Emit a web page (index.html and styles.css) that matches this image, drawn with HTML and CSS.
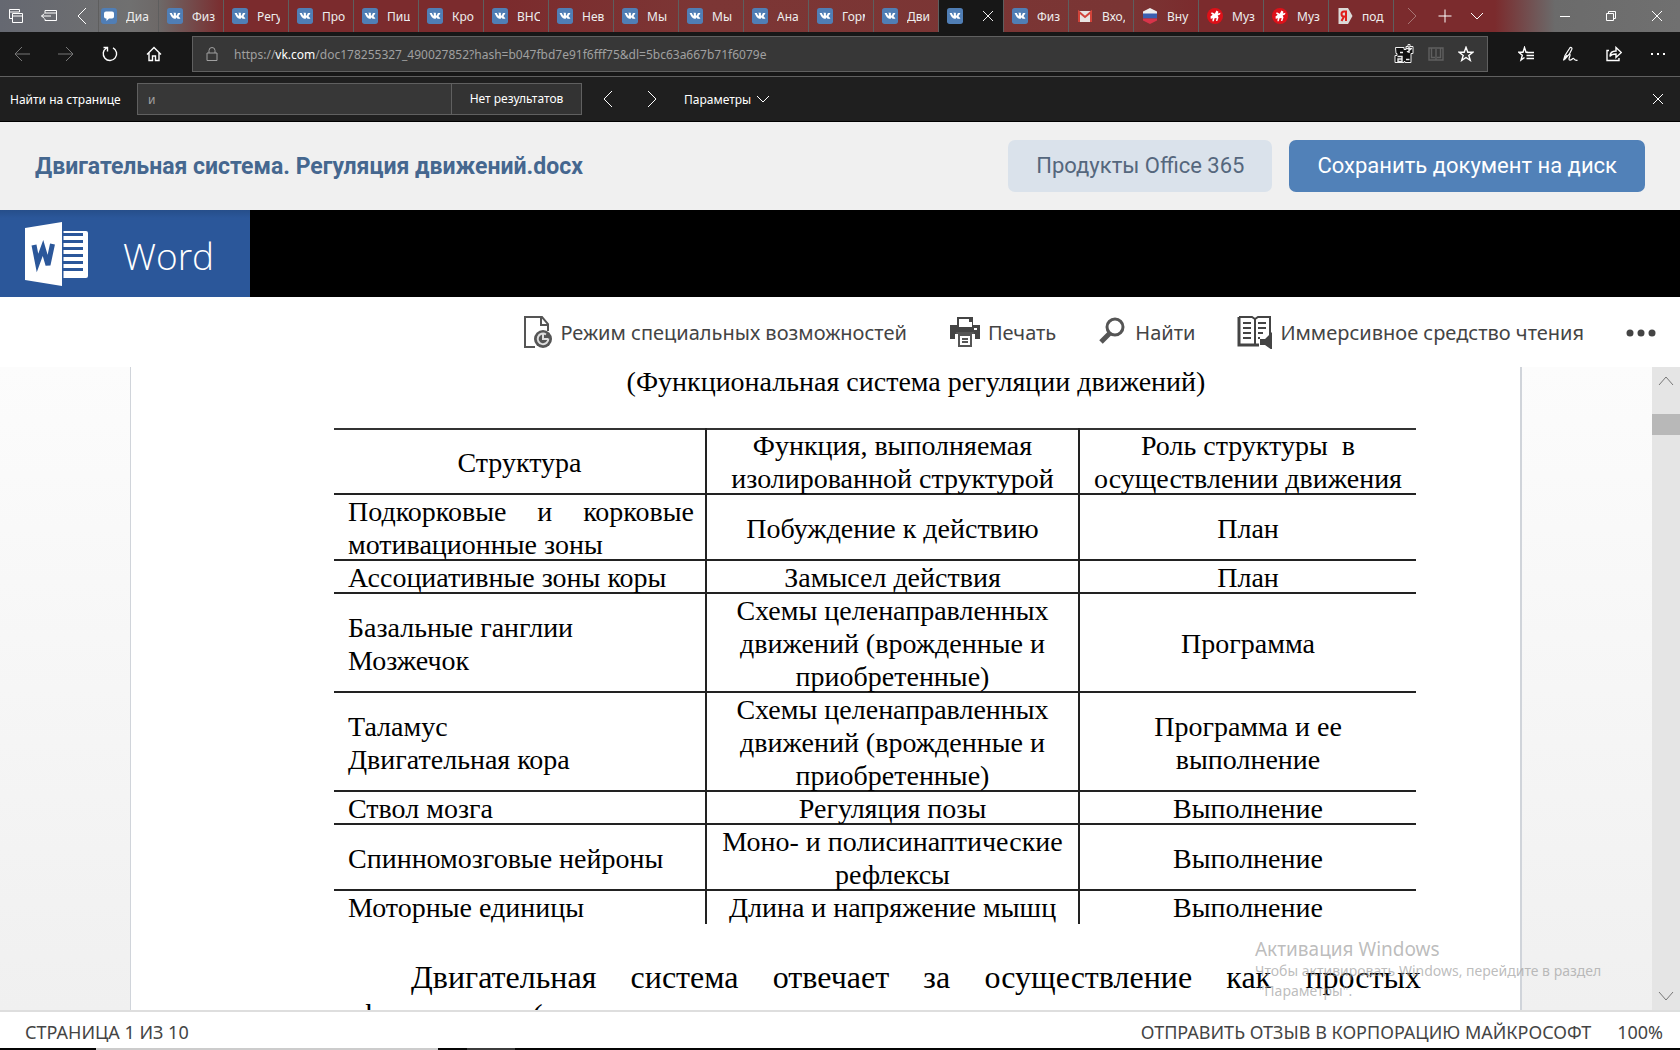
FILE: index.html
```html
<!DOCTYPE html>
<html lang="ru">
<head>
<meta charset="utf-8">
<title>Двигательная система. Регуляция движений.docx</title>
<link rel="stylesheet" href="styles.css">
</head>
<body>
<svg class="sprite" aria-hidden="true">
  <symbol id="vk" viewBox="0 0 24 24"><rect width="24" height="24" rx="4" fill="#507eb5"/><path fill="#fff" d="M12.785 16.241s.288-.032.436-.194c.136-.148.132-.427.132-.427s-.02-1.304.576-1.496c.588-.19 1.341 1.26 2.14 1.818.605.422 1.064.33 1.064.33l2.137-.03s1.117-.071.587-.964c-.043-.073-.308-.661-1.588-1.87-1.34-1.264-1.16-1.059.453-3.246.983-1.332 1.376-2.145 1.253-2.493-.117-.332-.84-.244-.84-.244l-2.406.015s-.178-.025-.31.056c-.13.079-.212.262-.212.262s-.382 1.03-.89 1.907c-1.07 1.85-1.499 1.948-1.674 1.832-.407-.267-.305-1.075-.305-1.648 0-1.793.267-2.54-.521-2.733-.262-.065-.454-.107-1.123-.114-.858-.009-1.585.003-1.996.208-.274.136-.485.44-.356.457.159.022.519.099.71.363.246.341.237 1.107.237 1.107s.142 2.11-.33 2.371c-.325.18-.77-.187-1.725-1.865-.489-.859-.859-1.81-.859-1.81s-.07-.176-.198-.272c-.154-.115-.37-.151-.37-.151l-2.286.015s-.343.01-.469.161C3.94 7.721 4.043 8 4.043 8s1.79 4.258 3.817 6.403c1.858 1.967 3.968 1.838 3.968 1.838h.957z"/></symbol>
  <symbol id="muz" viewBox="0 0 16 16"><circle cx="8" cy="8" r="8" fill="#de1119"/><path fill="#fff" d="M9.500 2.500l2 1.200-.7 1.800 2.700-.8-.5 1.800-2.300 1 .8 2-1.200 3.500H9l.6-3-2 .2-.9 3H5.400l.3-3.200-1.900 1L3.500 8.500l2.200-1.700L4 5.500l.8-1.300 3 1.500z"/></symbol>
  <symbol id="right" viewBox="0 0 16 16"><path d="M4 0l8 8-8 8"/></symbol>
  <symbol id="left" viewBox="0 0 16 16"><path d="M12 0L4 8l8 8"/></symbol>
  <symbol id="down" viewBox="0 0 16 16"><path d="M2 5l6 6 6-6"/></symbol>
  <symbol id="close" viewBox="0 0 16 16"><path d="M3 3l10 10M13 3L3 13"/></symbol>
</svg>

<header class="browser">
  <div class="tabs">
    <button class="strip-btn" aria-label="Отложенные вкладки"><svg class="ico" viewBox="0 0 16 16"><path d="M4 10.500H1.500v-9h10V4M1.500 4h10M4.500 5.500h10v9h-10zM4.500 8h10"/></svg></button>
    <button class="strip-btn strip-btn-wide" aria-label="Отложить вкладки"><svg class="ico" viewBox="0 0 16 16"><path d="M4 5V2.500h11.500v10H4V11M4 5h11.500M.5 8H10M3.500 5.500L.5 8l3 2.500"/></svg></button>
    <button class="strip-btn strip-btn-wide" aria-label="Назад по вкладкам"><svg class="ico"><use href="#left"/></svg></button>
    <button class="tab tab-first"><svg class="fav" viewBox="0 0 16 16"><rect width="16" height="16" rx="3" fill="#507eb5"/><path fill="#fff" d="M5 3.500h6a2 2 0 0 1 2 2v3a2 2 0 0 1-2 2H8l-2.500 2.500v-2.500H5a2 2 0 0 1-2-2v-3a2 2 0 0 1 2-2z"/></svg><span>Диа</span></button>
    <button class="tab"><svg class="fav"><use href="#vk"/></svg><span>Физ</span></button>
    <button class="tab"><svg class="fav"><use href="#vk"/></svg><span>Регу</span></button>
    <button class="tab"><svg class="fav"><use href="#vk"/></svg><span>Про</span></button>
    <button class="tab"><svg class="fav"><use href="#vk"/></svg><span>Пищ</span></button>
    <button class="tab"><svg class="fav"><use href="#vk"/></svg><span>Кро</span></button>
    <button class="tab"><svg class="fav"><use href="#vk"/></svg><span>ВНС</span></button>
    <button class="tab"><svg class="fav"><use href="#vk"/></svg><span>Нев</span></button>
    <button class="tab"><svg class="fav"><use href="#vk"/></svg><span>Мы</span></button>
    <button class="tab"><svg class="fav"><use href="#vk"/></svg><span>Мы</span></button>
    <button class="tab"><svg class="fav"><use href="#vk"/></svg><span>Ана</span></button>
    <button class="tab"><svg class="fav"><use href="#vk"/></svg><span>Горм</span></button>
    <button class="tab"><svg class="fav"><use href="#vk"/></svg><span>Дви</span></button>
    <div class="tab tab-active"><svg class="fav"><use href="#vk"/></svg><button class="tab-close" aria-label="Закрыть вкладку"><svg class="ico"><use href="#close"/></svg></button></div>
    <button class="tab"><svg class="fav"><use href="#vk"/></svg><span>Физ</span></button>
    <button class="tab"><svg class="fav" viewBox="0 0 16 16"><path fill="#e8e4e2" d="M1 3h14v11H1z"/><path fill="none" stroke="#d2443a" stroke-width="2" d="M2 14V4l6 5 6-5v10"/></svg><span>Вхо,</span></button>
    <button class="tab"><svg class="fav" viewBox="0 0 16 16"><path fill="#eee" d="M8 0l7 3.500V6H1V3.500z"/><path fill="#3b5fb0" d="M1 5.500h14v5H1z"/><path fill="#d8344a" d="M1 10.500h14v2L8 16l-7-3.500z"/></svg><span>Вну</span></button>
    <button class="tab"><svg class="fav"><use href="#muz"/></svg><span>Муз</span></button>
    <button class="tab"><svg class="fav"><use href="#muz"/></svg><span>Муз</span></button>
    <button class="tab"><svg class="fav" viewBox="0 0 16 16"><path fill="#dcdad8" d="M1.500 0H11l4.500 8-4.500 8H1.500z"/><path fill="none" stroke="#e0201b" stroke-width="2" d="M9 13V3.500H7a2.300 2.300 0 0 0 0 5h2M7 8.500L4.500 13"/></svg><span>под</span></button>
    <div class="strip-end">
      <button class="strip-btn strip-next" aria-label="Вперёд по вкладкам"><svg class="ico"><use href="#right"/></svg></button>
      <button class="strip-btn" aria-label="Новая вкладка"><svg class="ico" viewBox="0 0 16 16"><path d="M8 1.500v13M1.500 8h13"/></svg></button>
      <button class="strip-btn" aria-label="Список вкладок"><svg class="ico"><use href="#down"/></svg></button>
    </div>
    <div class="window-btns">
      <button aria-label="Свернуть"><svg class="ico" viewBox="0 0 16 16"><path d="M3 8.500h10"/></svg></button>
      <button aria-label="Восстановить"><svg class="ico" viewBox="0 0 16 16"><path d="M3.500 5.500h7v7h-7zM5.500 5.500v-2h7v7h-2"/></svg></button>
      <button aria-label="Закрыть"><svg class="ico"><use href="#close"/></svg></button>
    </div>
  </div>

  <div class="nav">
    <div class="nav-btns">
      <button class="dim" aria-label="Назад"><svg class="ico" viewBox="0 0 16 16"><path d="M16 8H1M8 1L1 8l7 7"/></svg></button>
      <button class="dim" aria-label="Вперёд"><svg class="ico" viewBox="0 0 16 16"><path d="M0 8h15M8 1l7 7-7 7"/></svg></button>
      <button aria-label="Обновить"><svg class="ico bold" viewBox="0 0 16 16"><path d="M11 1.800a6.700 6.700 0 1 1-6.500.200M1.500 1.500h4v4"/></svg></button>
      <button aria-label="Домой"><svg class="ico bold" viewBox="0 0 16 16"><path d="M1 8.500L8 1.500l7 7M3 7v7.500h3.500V10h3v4.500H13V7"/></svg></button>
    </div>
    <div class="address">
      <svg class="ico lock" viewBox="0 0 16 16"><path d="M3 7h10v7.500H3zM5 7V4.500a3 3 0 0 1 6 0V7"/></svg>
      <div class="url">https://<b>vk.com</b>/doc178255327_490027852?hash=b047fbd7e91f6fff75&amp;dl=5bc63a667b71f6079e</div>
      <button aria-label="Перевести"><svg class="ico ico-tr" viewBox="0 0 20 20"><path fill="#111" stroke="#eee" d="M1.500 3.500H10v2h2v-3h2v-2h2v2h3v7h-2v9h-6v-1h-1v1h-9v-7h2v-2h-1z"/><path stroke="#eee" stroke-width="1.400" d="M12 4.500h6M15 2v7M13 8l4-3M3.500 12.500h4.500v5H4V15h4M12 15.500h3.500M6 8.500h3"/></svg></button>
      <button class="faint" aria-label="Режим чтения"><svg class="ico bold" viewBox="0 0 16 16"><path d="M1 2h14v12H1zM3.500 2.500v9H7M12.500 2.500v9H9M8 3v11"/></svg></button>
      <button aria-label="В избранное"><svg class="ico bold" viewBox="0 0 16 16"><path d="M8 1.300l1.800 4.900h5l-4 3.200 1.500 5L8 11.500l-4.300 2.900 1.500-5-4-3.200h5z"/></svg></button>
    </div>
    <div class="nav-tools">
      <button aria-label="Избранное"><svg class="ico bold" viewBox="0 0 16 16"><path d="M10 6.200H8L6.500 1.500 5 6.200H.8l3.500 3-1.300 4.800 3.500-2.500M8.500 6.500H16M8.500 9.500H16M8.500 12.500H16"/></svg></button>
      <button aria-label="Заметки"><svg class="ico" viewBox="0 0 16 16"><path stroke-width="1.200" d="M1.500 14.500L3 9.500 7.500 2.500c1-1.800 3-1 2.300.8L7.500 8 2.500 13.500M5 9l-3.500 5.500M7.500 8c1.500.5-.5 3.500-.5 5s1.500 1.500 3 .2 2-.7 2.500.3 1.500.8 3 .8"/></svg></button>
      <button aria-label="Поделиться"><svg class="ico bold" viewBox="0 0 16 16"><path d="M3 4.500H1v10h12V12M4 10.500c0-4 2.500-5.500 6-5.500V1.500l5.300 5-5.300 5V8c-3 0-5 .5-6 2.500z"/></svg></button>
      <button aria-label="Ещё"><svg class="ico" viewBox="0 0 16 16"><path class="fill" d="M1 7h2v2H1zM7 7h2v2H7zM13 7h2v2h-2z"/></svg></button>
    </div>
  </div>

  <form class="find">
    <label for="find-text">Найти на странице</label>
    <input id="find-text" type="text" value="и">
    <output class="find-result" for="find-text">Нет результатов</output>
    <button type="button" class="find-step" aria-label="Предыдущее"><svg class="ico"><use href="#left"/></svg></button>
    <button type="button" class="find-step" aria-label="Следующее"><svg class="ico"><use href="#right"/></svg></button>
    <button type="button" class="find-options">Параметры<svg class="ico"><use href="#down"/></svg></button>
    <button type="button" class="find-close" aria-label="Закрыть"><svg class="ico"><use href="#close"/></svg></button>
  </form>
</header>

<div class="doc-head">
  <h1>Двигательная система. Регуляция движений.docx</h1>
  <button class="btn btn-light">Продукты Office 365</button>
  <button class="btn btn-blue">Сохранить документ на диск</button>
</div>

<div class="word-bar">
  <a class="word-logo" href="#">
    <svg viewBox="0 0 64 64" aria-hidden="true"><path fill="#fff" d="M0 6L37 0v64L0 58z"/><path fill="#fff" fill-rule="evenodd" d="M38.500 9H61q2 0 2 2v43q0 2-2 2H38.500v-7H58v-3H38.500v-4H58v-3H38.500v-4H58v-3H38.500v-4H58v-3H38.500v-4H58v-3H38.500v-4H58v-3H38.500z"/><path fill="none" stroke="#2b579a" stroke-width="5" d="M9 23l3.500 18L18 26l5 17L27.500 22"/></svg>
    <span>Word</span>
  </a>
</div>

<nav class="toolbar">
  <button><svg width="30" height="34" viewBox="0 0 30 34"><path fill="none" stroke="#555" stroke-width="2" d="M12 32H2V2h17l6 7v7M18 2v8h7"/><circle cx="20" cy="24" r="9" fill="#555"/><path fill="none" stroke="#ddd" stroke-width="2" d="M23 19.500a5.300 5.300 0 1 0 2.300 4M20 19v5h5"/></svg>Режим специальных возможностей</button>
  <button><svg width="32" height="34" viewBox="0 0 32 34"><path fill="#444" d="M1 10h30v14h-5v-5H6v5H1zM8 10V2h16v8z"/><path fill="#fff" d="M10 4h10v3h3v5H10zM25 13h3v2h-3zM8 20h16v12H8z"/><path fill="none" stroke="#555" stroke-width="2" d="M10 20h12v11H10zM13 24h6M13 27h6M7 18h18"/></svg>Печать</button>
  <button><svg width="30" height="34" viewBox="0 0 30 34"><circle cx="17" cy="12" r="8" fill="none" stroke="#555" stroke-width="3"/><path stroke="#555" stroke-width="5" d="M12 18l-9 9"/></svg>Найти</button>
  <button><svg width="36" height="34" viewBox="0 0 36 34"><path fill="none" stroke="#444" stroke-width="2" d="M2 2h13l3 2 3-2h12v18"/><path fill="none" stroke="#444" stroke-width="3" d="M2 2v28h20"/><path fill="none" stroke="#444" stroke-width="2" d="M18 4v25M6 8h8M6 13h8M6 18h8M6 23h8M21 8h8M21 13h8M21 18h5M21 23h2"/><path fill="#444" d="M23 24h5l7-7v18l-7-5h-5z"/></svg>Иммерсивное средство чтения</button>
  <button class="more" aria-label="Ещё"><svg width="30" height="34" viewBox="0 0 30 34"><g fill="#444"><circle cx="4" cy="18" r="3.500"/><circle cx="15" cy="18" r="3.500"/><circle cx="26" cy="18" r="3.500"/></g></svg></button>
</nav>

<main class="viewer">
  <div class="canvas">
    <article class="page">
      <h2>(Функциональная система регуляции движений)</h2>
      <table>
        <colgroup><col class="c1"><col class="c2"><col class="c3"></colgroup>
        <thead>
          <tr><th>Структура</th><th>Функция, выполняемая изолированной структурой</th><th>Роль структуры &nbsp;в осуществлении движения</th></tr>
        </thead>
        <tbody>
          <tr><td>Подкорковые и корковые мотивационные зоны</td><td>Побуждение к действию</td><td>План</td></tr>
          <tr><td>Ассоциативные зоны коры</td><td>Замысел действия</td><td>План</td></tr>
          <tr><td>Базальные ганглии<br>Мозжечок</td><td>Схемы целенаправленных движений (врожденные и приобретенные)</td><td>Программа</td></tr>
          <tr><td>Таламус<br>Двигательная кора</td><td>Схемы целенаправленных движений (врожденные и приобретенные)</td><td>Программа и ее выполнение</td></tr>
          <tr><td>Ствол мозга</td><td>Регуляция позы</td><td>Выполнение</td></tr>
          <tr><td>Спинномозговые нейроны</td><td>Моно- и полисинаптические рефлексы</td><td>Выполнение</td></tr>
          <tr><td>Моторные единицы</td><td>Длина и напряжение мышц</td><td>Выполнение</td></tr>
        </tbody>
      </table>
      <p>Двигательная система отвечает за осуществление как простых рефлекторных (</p>
    </article>
  </div>
  <div class="scroll">
    <svg class="ico" viewBox="0 0 16 16"><path d="M1 12l7-8 7 8"/></svg>
    <div class="thumb"></div>
    <svg class="ico" viewBox="0 0 16 16"><path d="M1 4l7 8 7-8"/></svg>
  </div>
  <div class="watermark">
    <strong>Активация Windows</strong>
    <span>Чтобы активировать Windows, перейдите в раздел</span>
    <span>&nbsp;"Параметры".</span>
  </div>
</main>

<footer class="status">
  <span>СТРАНИЦА 1 ИЗ 10</span>
  <a href="#">ОТПРАВИТЬ ОТЗЫВ В КОРПОРАЦИЮ МАЙКРОСОФТ</a>
  <span>100%</span>
</footer>
<div class="taskbar"></div>
</body>
</html>
```
FILE: styles.css
```css
* { box-sizing: border-box; }
body {
  margin: 0;
  height: 100vh;
  display: flex;
  flex-direction: column;
  overflow: hidden;
  font-family: "Noto Sans", "Open Sans", sans-serif;
  background: #fff;
}
button {
  margin: 0;
  padding: 0;
  border: 0;
  background: none;
  color: inherit;
  font: inherit;
}
a { color: inherit; text-decoration: none; }
.sprite { position: absolute; width: 0; height: 0; }
.ico {
  flex: none;
  width: 16px;
  height: 16px;
  fill: none;
  stroke: currentColor;
  stroke-width: 1;
}
.ico.bold { stroke-width: 1.4; }
.ico .fill { fill: currentColor; stroke: none; }

/* Browser chrome */
.browser { flex: none; color: #fff; font-size: 12px; }
.tabs {
  display: flex;
  height: 32px;
  background: linear-gradient(90deg, #656871 0, #707070 130px, #6d6867 160px, #7b2b2d 225px, #7b2b2d 500px, #7c3635 700px, #7a3534 1130px, #7b2b2d 1200px, #7b2b2d calc(100% - 185px), #6b6b6b calc(100% - 125px), #707070 100%);
}
.strip-btn { width: 32px; display: grid; place-items: center; }
.strip-btn-wide { width: 33px; }
.tab {
  flex: 0 1 65px;
  min-width: 0;
  display: flex;
  align-items: center;
  gap: 9px;
  padding: 0 8px;
  border-left: 1px solid #5e5e5e;
  color: #eee;
}
.tab-first { flex-basis: 60px; padding: 0 7px 0 2px; }
.tab span {
  flex: 1;
  min-width: 0;
  overflow: hidden;
  white-space: nowrap;
  text-align: left;
}
.tab-active { background: #171717; gap: 17px; }
.tab-close { display: grid; }
.fav { flex: none; width: 16px; height: 16px; }
.strip-end { display: flex; flex: 1; border-left: 1px solid #5e5e5e; }
.strip-next { width: 35px; color: #a87574; }
.window-btns { display: flex; }
.window-btns button { width: 46px; display: grid; place-items: center; }

.nav {
  display: flex;
  align-items: center;
  height: 45px;
  background: #171717;
  border-bottom: 1px solid #606060;
}
.nav-btns { display: flex; gap: 28px; padding: 0 30px 0 14px; }
.nav button { display: grid; place-items: center; }
.nav .dim { color: #777; }
.address {
  flex: 1;
  min-width: 0;
  height: 36px;
  display: flex;
  align-items: center;
  gap: 14px;
  padding: 0 13px 0 11px;
  background: #373737;
  border: 1px solid #606060;
  color: #a0a0a0;
}
.url { flex: 1; min-width: 0; overflow: hidden; white-space: nowrap; }
.url b { font-weight: 400; color: #fff; }
.address button { color: #fff; }
.address .faint { color: #606060; }
.ico-tr { width: 20px; height: 20px; }
.lock { color: #a0a0a0; }
.nav-tools { display: flex; gap: 28px; padding: 0 14px 0 30px; }

.find {
  display: flex;
  align-items: center;
  height: 45px;
  margin: 0;
  padding: 0 14px 0 10px;
  background: #1f1f1f;
  border-bottom: 1px solid #000;
}
.find label { width: 127px; }
.find input {
  width: 315px;
  height: 32px;
  padding: 0 10px;
  border: 1px solid #606060;
  border-radius: 0;
  background: #373737;
  color: #a0a0a0;
  font: inherit;
}
.find-result {
  width: 130px;
  height: 32px;
  line-height: 30px;
  text-align: center;
  background: #333;
  border: 1px solid #606060;
  border-left: 0;
}
.find-step { display: grid; margin-left: 18px; }
.find-step + .find-step { margin-left: 28px; }
.find-options { display: flex; align-items: center; gap: 4px; margin-left: 24px; }
.find-close { display: grid; margin-left: auto; }

/* Document header */
.doc-head {
  flex: none;
  display: flex;
  align-items: center;
  gap: 17px;
  height: 88px;
  padding: 0 35px;
  background: #f0f0f0;
  font-family: Roboto, sans-serif;
}
.doc-head h1 {
  flex: 1;
  margin: 0;
  font-size: 23px;
  font-weight: 700;
  color: #45678f;
}
.btn { height: 52px; padding: 0 28px 2px; border-radius: 7px; font-size: 22px; }
.btn-light { background: #dae2eb; color: #55677d; }
.btn-blue { background: #5181b8; color: #fff; }

.word-bar { flex: none; height: 87px; display: flex; background: #000; }
.word-logo {
  width: 250px;
  display: flex;
  align-items: center;
  gap: 34px;
  padding-left: 25px;
  background: linear-gradient(#264e8a 0, #2b579a 8px);
  color: #fff;
  font-family: "Open Sans", "Noto Sans", sans-serif;
  font-size: 37px;
  font-weight: 300;
}
.word-logo svg { width: 64px; height: 64px; }
.word-logo span { padding-top: 4px; }

.toolbar {
  flex: none;
  display: flex;
  justify-content: flex-end;
  align-items: center;
  gap: 42px;
  height: 70px;
  padding-right: 24px;
  font-size: 20px;
  color: #444;
}
.toolbar button { display: flex; align-items: center; gap: 7px; }

/* Page view */
.viewer { position: relative; flex: 1; min-height: 0; display: flex; overflow: hidden; }
.canvas {
  flex: 1;
  min-width: 0;
  overflow: hidden;
  background: linear-gradient(#fcfcfc, #f0f0f0);
}
.page {
  max-width: 1392px;
  min-height: 100%;
  margin: 0 auto;
  padding: 0 99px 0 197px;
  background: #fff;
  border: solid #d0d4da;
  border-width: 0 2px 0 1px;
  color: #000;
  font: 28px/33px "Liberation Serif", serif;
}
.page h2 {
  margin: 0 0 31px;
  font-size: 28px;
  line-height: 30px;
  font-weight: 400;
  text-align: center;
  text-indent: 83px;
}
table {
  width: calc(100% - 11px);
  margin-left: 6px;
  table-layout: fixed;
  border-spacing: 0;
}
.c1 { width: 373px; }
.c2 { width: 373px; }
th, td {
  padding: 0 11px;
  font-weight: 400;
  text-align: center;
  box-shadow: inset 0 -2px #222;
}
th { padding-top: 1px; box-shadow: inset 0 2px #333, inset 0 -2px #222; }
td:first-child { text-align: justify; padding-left: 14px; }
th:not(:last-child), td:not(:last-child) { border-right: 2px solid #222; }
tbody tr:last-child td { box-shadow: none; }
.page p {
  margin: 34px 0 0;
  font-size: 32px;
  line-height: 38px;
  text-align: justify;
  text-indent: 83px;
}

.scroll {
  flex: none;
  width: 28px;
  display: flex;
  flex-direction: column;
  align-items: center;
  padding: 6px 0;
  background: #e5e5e5;
  color: #777;
}
.thumb { width: 100%; height: 21px; margin: 25px 0 auto; background: #b8b8b8; }
.watermark {
  position: absolute;
  right: 70px;
  bottom: 9px;
  display: flex;
  flex-direction: column;
  width: 355px;
  font-size: 14px;
  line-height: 20px;
  white-space: nowrap;
  color: rgba(160, 160, 160, .7);
}
.watermark strong { font-size: 19px; line-height: 24px; font-weight: 400; }

.status {
  flex: none;
  display: flex;
  align-items: center;
  gap: 26px;
  height: 38px;
  padding: 4px 17px 0 25px;
  border-top: 2px solid #dedede;
  background: #fff;
  font-size: 18px;
  line-height: 24px;
  color: #444;
}
.status span:first-child { margin-right: auto; }
.taskbar {
  flex: none;
  height: 2px;
  background: linear-gradient(90deg, #050505 96px, #ccc 96px, #ccc 438px, #050505 438px, #050505 467px, #3c3c3c 467px, #3c3c3c 515px, #050505 515px);
}
```
